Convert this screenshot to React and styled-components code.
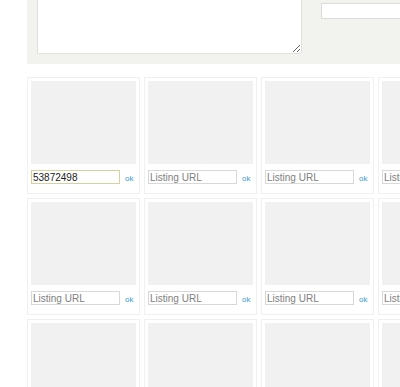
import React from 'react'
import styled, { createGlobalStyle } from 'styled-components';

const GlobalStyle = createGlobalStyle`
    html, body {
        margin: 0;
        padding: 0;
        background: #fff;
        overflow: hidden;
        font-family: "Liberation Sans", Arial, sans-serif;
    }
`;

const Page = styled.div`
    padding-left: 27px;
    width: 700px;
`;

const TopPanel = styled.div`
    display: flex;
    align-items: flex-start;
    margin-top: -20px;
    padding: 10px 10px 10px 10px;
    background: #f2f2ef;
`;

const Notes = styled.textarea`
    width: 263px;
    height: 62px;
    margin: 0;
    padding: 0;
    border: 1px solid #e0e0dc;
    border-radius: 0 0 3px 0;
    background: #fff;
    resize: both;
`;

const SideInput = styled.input`
    margin: 13px 0 0 19px;
    width: 200px;
    height: 14px;
    padding: 0;
    border: 1px solid #dcdcd8;
    background: #fff;
`;

const Grid = styled.div`
    display: grid;
    grid-template-columns: repeat(5, 113px);
    grid-auto-rows: 117px;
    gap: 4px;
    margin-top: 13px;
`;

const Card = styled.div`
    box-sizing: border-box;
    border: 1px solid #f0f0f0;
    padding: 3px;
    display: flex;
    flex-direction: column;
`;

const Thumb = styled.div`
    height: 83px;
    background: #f1f1f1;
`;

const UrlRow = styled.div`
    display: flex;
    align-items: center;
    margin-top: 6px;
`;

const UrlInput = styled.input`
    box-sizing: border-box;
    width: 89px;
    height: 14px;
    margin: 0;
    padding: 0 1px;
    border: 1px solid ${p => (p.$active ? '#d6d29e' : '#d8d8d8')};
    font-family: "Liberation Sans", Arial, sans-serif;
    font-size: 10px;
    font-weight: normal;
    color: #222;
    outline: none;
    &::placeholder {
        color: #808080;
    }
`;

const Ok = styled.a`
    margin: 2px 0 0 5px;
    font-size: 8px;
    color: #3a9ccc;
    text-decoration: none;
`;

const items = [
    '53872498', '', '', '', '',
    '', '', '', '', '',
    '', '', '', '', '',
];

const App = () => {
    return (
        <Page>
            <GlobalStyle />
            <TopPanel>
                <Notes />
                <SideInput />
            </TopPanel>
            <Grid>
                {items.map((v, i) => (
                    <Card key={i}>
                        <Thumb />
                        <UrlRow>
                            <UrlInput
                                $active={i === 0}
                                defaultValue={v}
                                placeholder="Listing URL"
                            />
                            <Ok href="#">ok</Ok>
                        </UrlRow>
                    </Card>
                ))}
            </Grid>
        </Page>
    )
}

export default App
